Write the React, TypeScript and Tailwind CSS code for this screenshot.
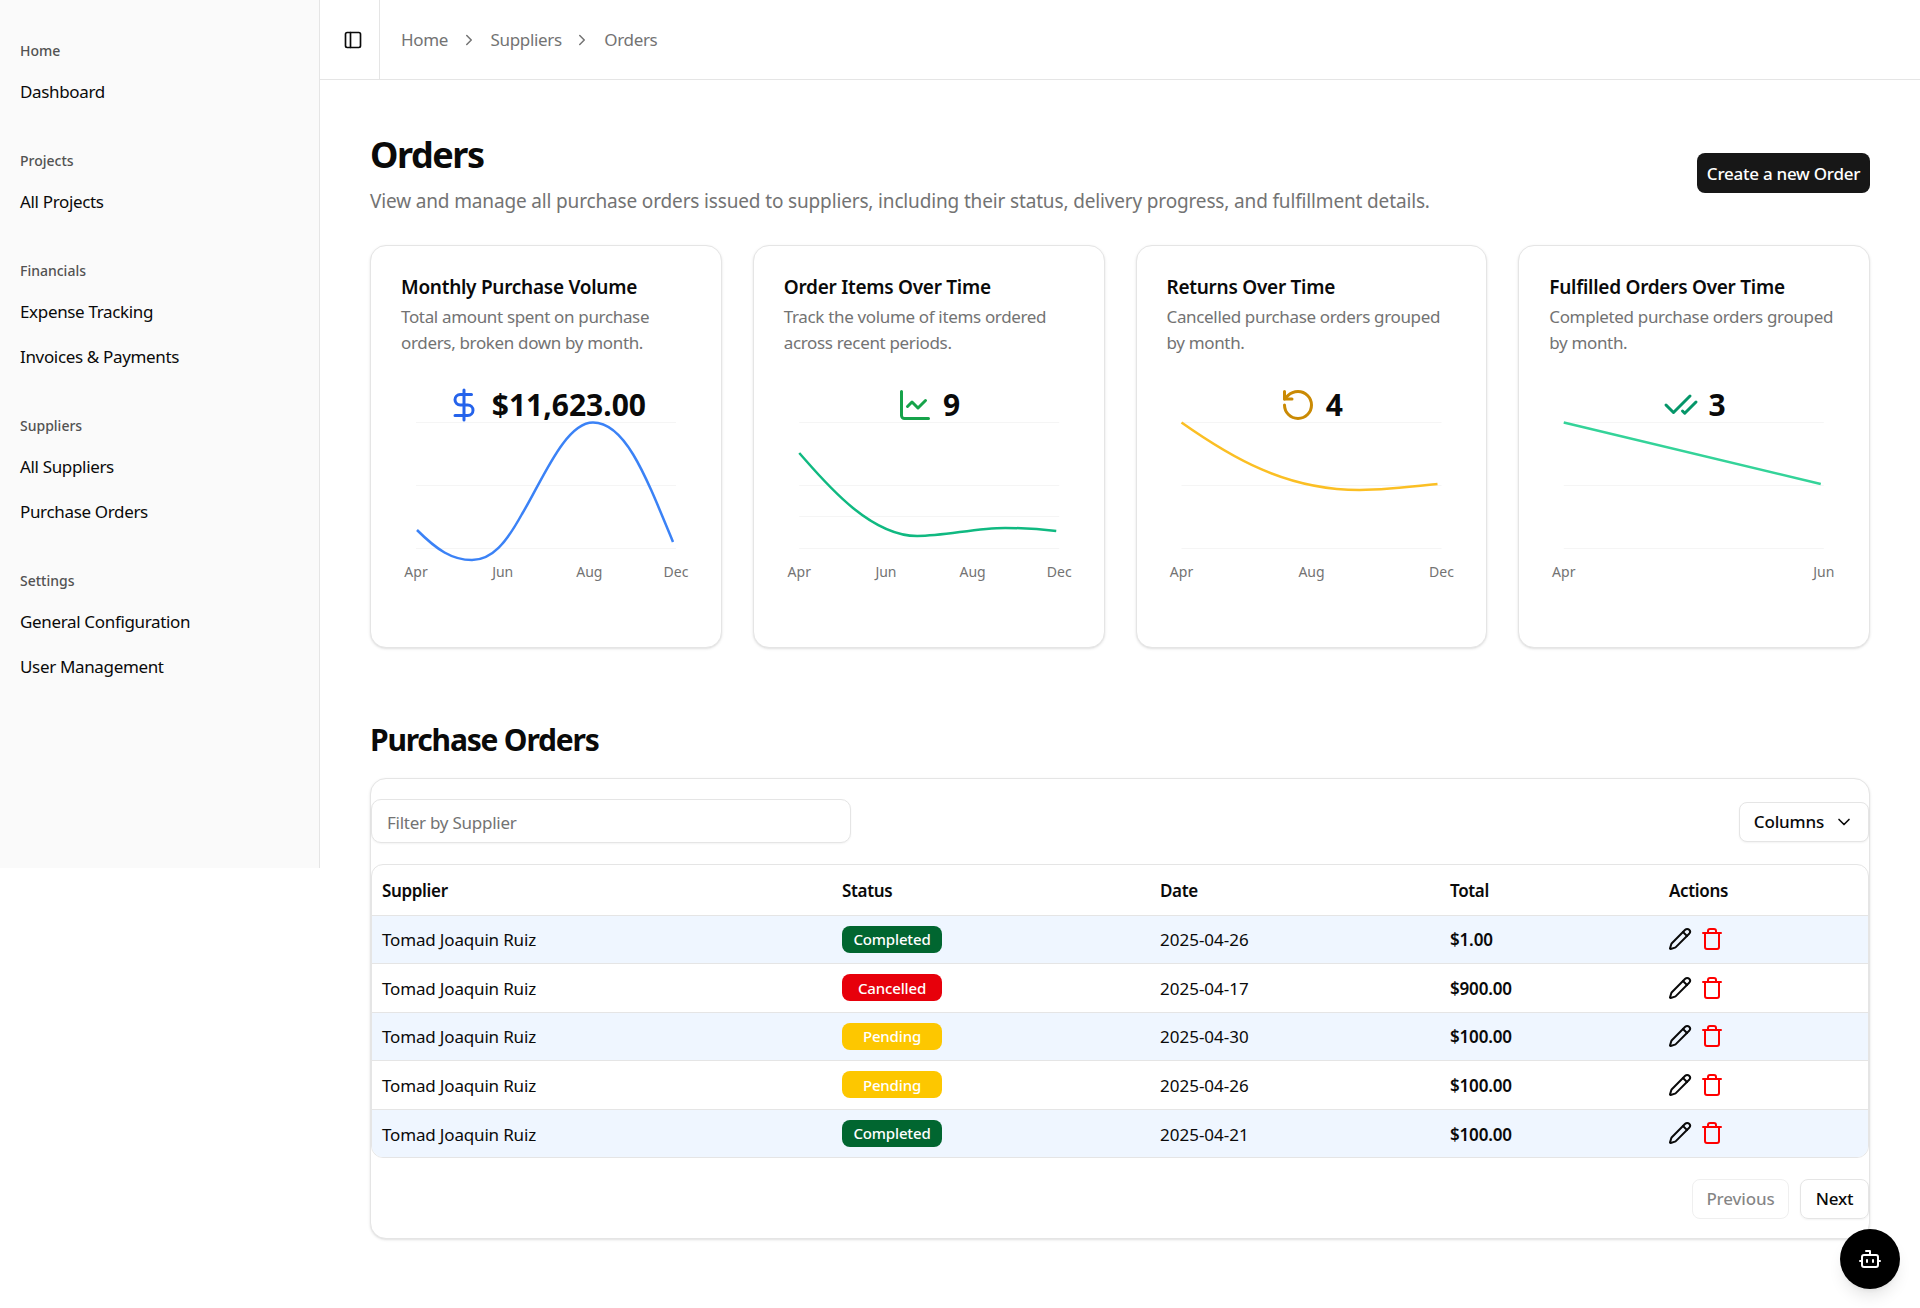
import { Bot, CheckCheck, ChartLine, ChevronDown, ChevronRight, DollarSign, PanelLeft, Pencil, RotateCcw, Trash } from "lucide-react";
import type { ReactNode } from "react";

const groups = [
  { label: "Home", items: ["Dashboard"] },
  { label: "Projects", items: ["All Projects"] },
  { label: "Financials", items: ["Expense Tracking", "Invoices & Payments"] },
  { label: "Suppliers", items: ["All Suppliers", "Purchase Orders"] },
  { label: "Settings", items: ["General Configuration", "User Management"] },
];

type CardData = {
  title: string;
  desc: string[];
  icon: ReactNode;
  value: string;
  grid: number[];
  ticks: [string, number][];
  color: string;
  origin: number;
  path: string;
};

const cards: CardData[] = [
  {
    title: "Monthly Purchase Volume",
    desc: ["Total amount spent on purchase", "orders, broken down by month."],
    icon: <DollarSign className="w-9 h-9 text-[#2563eb]" />,
    value: "$11,623.00",
    grid: [423.5, 486.5, 549.5],
    ticks: [["Apr", 416], ["Jun", 502.7], ["Aug", 589.3], ["Dec", 676]],
    color: "#3b82f6",
    origin: 401,
    path: "M417,531 C437,551 452,561 472,561 C492,561 506,544 522,515 C542,482 565,423.5 593,423.5 C625,423.5 645,475 673,543",
  },
  {
    title: "Order Items Over Time",
    desc: ["Track the volume of items ordered", "across recent periods."],
    icon: <ChartLine className="w-9 h-9 text-[#16a34a]" />,
    value: "9",
    grid: [423.5, 486.5, 517.5, 549.5],
    ticks: [["Apr", 799], ["Jun", 885.7], ["Aug", 972.3], ["Dec", 1059]],
    color: "#10b981",
    origin: 783.75,
    path: "M799,454 C822,480 868,537 917,537 C945,537 975,529 1005,529 C1022,529 1040,530 1056,532",
  },
  {
    title: "Returns Over Time",
    desc: ["Cancelled purchase orders grouped", "by month."],
    icon: <RotateCcw className="w-9 h-9 text-[#ca8a04]" />,
    value: "4",
    grid: [423.5, 486.5, 549.5],
    ticks: [["Apr", 1181], ["Aug", 1311], ["Dec", 1441]],
    color: "#fbbf24",
    origin: 1166.5,
    path: "M1181,423.5 C1230,458 1285,491 1359,491 C1385,491 1410,488 1437,485",
  },
  {
    title: "Fulfilled Orders Over Time",
    desc: ["Completed purchase orders grouped", "by month."],
    icon: <CheckCheck className="w-9 h-9 text-[#059669]" />,
    value: "3",
    grid: [423.5, 486.5, 549.5],
    ticks: [["Apr", 1564], ["Jun", 1824]],
    color: "#34d399",
    origin: 1549.25,
    path: "M1564,423.5 L1821,485",
  },
];

function Chart({ c }: { c: CardData }) {
  return (
    <svg width="289" height="165" className="block overflow-visible">
      <g transform={`translate(${-c.origin},-423)`}>
        {c.grid.map((y) => (
          <line key={y} x1={c.ticks[0][1]} x2={c.ticks[c.ticks.length - 1][1]} y1={y} y2={y} stroke="#f5f5f5" strokeWidth="1" />
        ))}
        <path d={c.path} fill="none" stroke={c.color} strokeWidth="2.5" />
        {c.ticks.map(([t, x]) => (
          <text key={t} x={x} y={578} textAnchor="middle" fontSize="14" fill="#737373">
            {t}
          </text>
        ))}
      </g>
    </svg>
  );
}

const rows = [
  { status: "Completed", date: "2025-04-26", total: "$1.00", badge: "bg-[#016630]", row: "bg-[#eff6ff] h-[48px]" },
  { status: "Cancelled", date: "2025-04-17", total: "$900.00", badge: "bg-[#e7000b]", row: "bg-white h-[49px]" },
  { status: "Pending", date: "2025-04-30", total: "$100.00", badge: "bg-[#fdc700]", row: "bg-[#eff6ff] h-[48px]" },
  { status: "Pending", date: "2025-04-26", total: "$100.00", badge: "bg-[#fdc700]", row: "bg-white h-[49px]" },
  { status: "Completed", date: "2025-04-21", total: "$100.00", badge: "bg-[#016630]", row: "bg-[#eff6ff] h-[48px]" },
];

export default function App() {
  return (
    <div className="flex items-start min-h-[1308px] bg-white text-[#0a0a0a] font-['Noto_Sans',sans-serif]">
      <aside className="w-[320px] h-[868px] shrink-0 bg-[#fafafa] border-r border-[#e5e5e5] pt-8 pl-5 flex flex-col gap-7">
        {groups.map((g) => (
          <div key={g.label}>
            <div className="h-[37px] flex items-center text-sm font-medium text-[#525252]">{g.label}</div>
            {g.items.map((i) => (
              <div key={i} className="h-[45px] flex items-center text-[17px] tracking-[-0.02em]">{i}</div>
            ))}
          </div>
        ))}
      </aside>
      <div className="flex-1 min-w-0">
        <header className="h-20 border-b border-[#e5e5e5] flex items-center">
          <div className="w-[60px] h-full border-r border-[#e5e5e5] pl-[23px] flex items-center">
            <PanelLeft className="w-5 h-5" />
          </div>
          <nav className="ml-[21px] pt-px flex items-center text-[17px] text-[#737373] tracking-[-0.02em]">
            <span>Home</span>
            <ChevronRight className="w-[18px] h-[18px] ml-[11.5px] mr-[13px]" />
            <span>Suppliers</span>
            <ChevronRight className="w-[18px] h-[18px] ml-[11.5px] mr-[13px]" />
            <span>Orders</span>
          </nav>
        </header>
        <main className="px-[50px] pt-[55px]">
          <div className="flex justify-between items-start">
            <div>
              <h1 className="text-4xl font-bold tracking-[-0.04em]">Orders</h1>
              <p className="mt-3 text-[19px] leading-7 text-[#737373] tracking-[-0.008em]">
                View and manage all purchase orders issued to suppliers, including their status, delivery progress, and fulfillment details.
              </p>
            </div>
            <button className="mt-[18px] h-10 w-[173px] pt-px rounded-lg bg-[#171717] text-white text-[17px] font-medium tracking-[-0.015em]">Create a new Order</button>
          </div>
          <div className="mt-[30px] grid grid-cols-4 gap-[31px]">
            {cards.map((c) => (
              <div key={c.title} className="h-[403px] rounded-2xl border border-[#e5e5e5] bg-white shadow-sm px-[30px] pt-[27px]">
                <h3 className="text-[19px] leading-7 font-semibold tracking-[-0.014em] whitespace-nowrap">{c.title}</h3>
                <p className="mt-[3px] text-[17px] leading-[25.5px] text-[#737373] tracking-[-0.02em] whitespace-nowrap">
                  {c.desc[0]}
                  <br />
                  {c.desc[1]}
                </p>
                <div className="mt-8 -mb-px h-9 flex items-center justify-center gap-2.5 text-3xl font-bold">
                  {c.icon}
                  <span>{c.value}</span>
                </div>
                <Chart c={c} />
              </div>
            ))}
          </div>
          <h2 className="mt-[74px] text-3xl font-bold tracking-[-0.04em]">Purchase Orders</h2>
          <section className="mt-5 h-[461px] rounded-2xl border border-[#e5e5e5] bg-white shadow-sm pt-5">
            <div className="flex items-start justify-between">
              <input
                placeholder="Filter by Supplier"
                className="w-[480px] h-11 rounded-[10px] border border-[#e5e5e5] bg-white shadow-xs pl-[15px] pt-[2px] text-[17px] tracking-[-0.015em] placeholder:text-[#737373] outline-none"
              />
              <button className="mt-[3px] h-10 w-[130px] rounded-lg border border-[#e5e5e5] bg-white shadow-xs flex items-center justify-center gap-2.5 text-[17px] font-medium tracking-[-0.01em]">
                Columns
                <ChevronDown className="w-5 h-5" />
              </button>
            </div>
            <div className="mt-[21px] rounded-xl border border-[#e5e5e5] overflow-hidden">
              <table className="w-full table-fixed border-collapse text-[17px]">
                <colgroup>
                  <col className="w-[460px]" />
                  <col className="w-[318px]" />
                  <col className="w-[290px]" />
                  <col className="w-[219px]" />
                  <col />
                </colgroup>
                <thead>
                  <tr className="h-[50px] border-b border-[#e5e5e5]">
                    {["Supplier", "Status", "Date", "Total", "Actions"].map((h) => (
                      <th key={h} className="text-left font-semibold tracking-[-0.02em] px-[10px] pt-px">{h}</th>
                    ))}
                  </tr>
                </thead>
                <tbody>
                  {rows.map((r, i) => (
                    <tr key={i} className={`${r.row} border-b border-[#e5e5e5] last:border-b-0`}>
                      <td className="px-[10px] pt-[2px] tracking-[-0.01em]">Tomad Joaquin Ruiz</td>
                      <td className="px-[10px]">
                        <span className={`${r.badge} w-[100px] h-[27px] rounded-lg inline-flex items-center justify-center align-middle text-white text-[15px] font-medium tracking-[-0.01em]`}>{r.status}</span>
                      </td>
                      <td className="px-[10px] pt-[2px]">{r.date}</td>
                      <td className="px-[10px] pt-[2px] font-semibold tracking-[-0.01em]">{r.total}</td>
                      <td className="px-[10px]">
                        <div className="flex items-center gap-2 -ml-px">
                          <Pencil className="w-6 h-6" />
                          <Trash className="w-6 h-6 text-[#ff0000]" />
                        </div>
                      </td>
                    </tr>
                  ))}
                </tbody>
              </table>
            </div>
            <div className="mt-[21px] flex justify-end gap-[11px]">
              <button className="h-10 w-[97px] rounded-lg border border-[#e5e5e5]/60 text-[17px] font-medium text-[#0a0a0a]/50 tracking-[-0.01em]">Previous</button>
              <button className="h-10 w-[69px] rounded-lg border border-[#e5e5e5] shadow-xs text-[17px] font-medium tracking-[-0.01em]">Next</button>
            </div>
          </section>
        </main>
      </div>
      <button className="fixed right-5 bottom-[19px] w-[60px] h-[60px] rounded-full bg-black text-white flex items-center justify-center shadow-lg">
        <Bot className="w-6 h-6" />
      </button>
    </div>
  );
}
